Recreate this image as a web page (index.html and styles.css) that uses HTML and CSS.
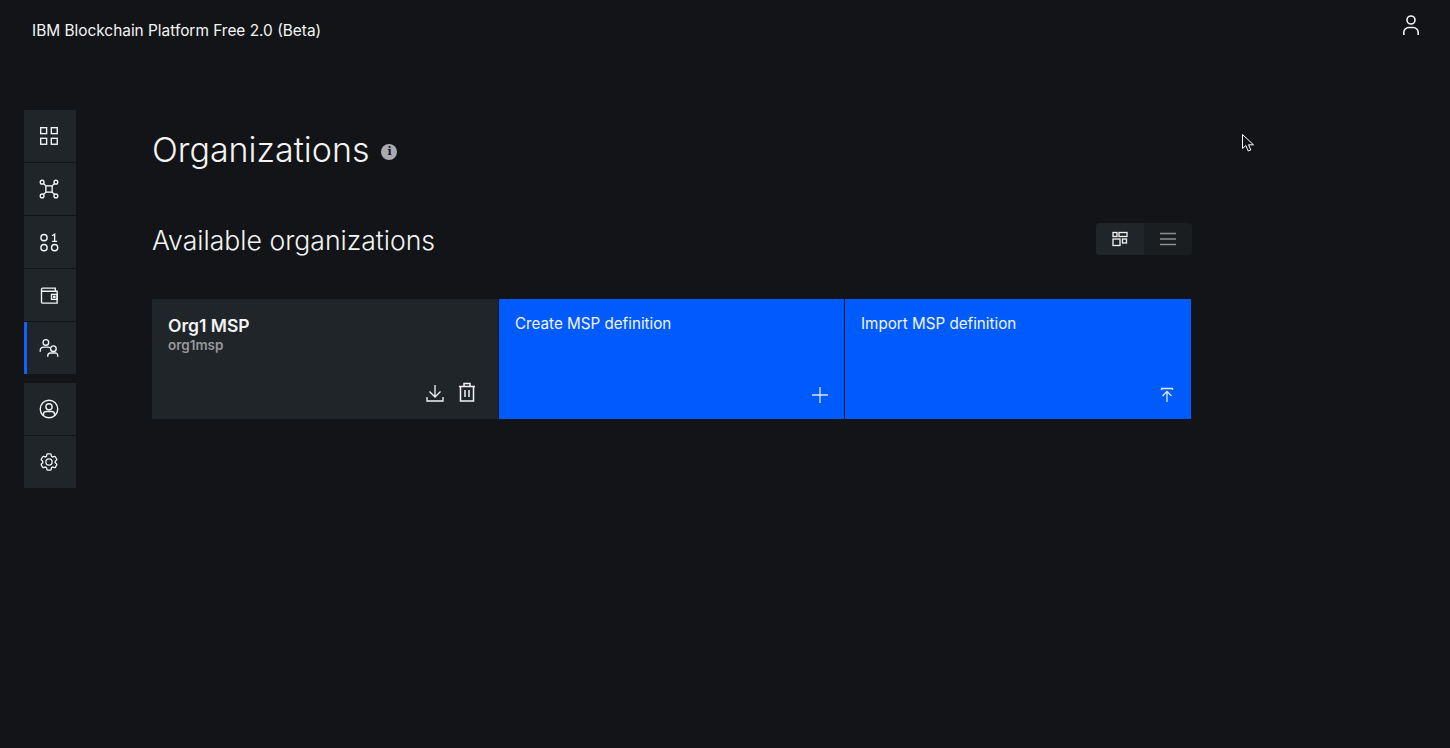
FILE: index.html
```html
<!DOCTYPE html>
<html lang="en">
<head>
<meta charset="utf-8">
<title>IBM Blockchain Platform</title>
<link rel="stylesheet" href="styles.css">
</head>
<body>
<header class="topbar">
  <span class="brand">IBM Blockchain Platform Free 2.0 (Beta)</span>
  <svg class="icon-user" viewBox="0 0 20 24" width="20" height="24" fill="none" stroke="#f4f4f4" stroke-width="1.6"><circle cx="10" cy="6" r="4"/><path d="M2.800 21v-2.500a5 5 0 0 1 5-5h4.400a5 5 0 0 1 5 5V21"/></svg>
</header>
<div class="shell">
  <nav class="sidenav">
    <div class="navgroup">
      <a class="navitem"><svg viewBox="0 0 32 32" class="navicon"><rect x="2.700" y="2.700" width="9.500" height="9.500"/><rect x="19.700" y="2.700" width="9.500" height="9.500"/><rect x="2.700" y="19.700" width="9.500" height="9.500"/><rect x="19.700" y="19.700" width="9.500" height="9.500"/></svg></a>
      <a class="navitem"><svg viewBox="0 0 32 32" class="navicon"><circle cx="5" cy="5" r="3"/><circle cx="27" cy="5" r="3"/><circle cx="5" cy="27" r="3"/><circle cx="27" cy="27" r="3"/><rect x="11" y="11" width="10" height="10"/><path d="M7.200 7.200l3.800 3.800M24.800 7.200l-3.800 3.800M7.200 24.800l3.800-3.800M24.800 24.800l-3.800-3.800"/></svg></a>
      <a class="navitem"><svg viewBox="0 0 32 32" class="navicon"><circle cx="8" cy="9" r="5"/><circle cx="8" cy="25" r="5"/><circle cx="25" cy="25" r="5"/><path d="M21 6 25 3.500V15M21 15h8"/></svg></a>
      <a class="navitem"><svg viewBox="0 0 32 32" class="navicon"><path d="M4 10h25v19H6a2 2 0 0 1-2-2V7a2 2 0 0 1 2-2h20v5"/><rect x="20" y="15" width="9" height="8"/><circle cx="24.500" cy="19" r="1.200"/></svg></a>
      <a class="navitem active"><svg viewBox="0 0 32 32" class="navicon"><circle cx="11" cy="7" r="4.500"/><path d="M2 22v-2a5.500 5.500 0 0 1 5.500-5.500h7a5.500 5.500 0 0 1 3 1"/><circle cx="23" cy="17" r="4.500"/><path d="M14 30v-1.500a4.500 4.500 0 0 1 4.500-4.500h9a4.500 4.500 0 0 1 2.500 4.500V30"/></svg></a>
    </div>
    <div class="navgroup">
      <a class="navitem"><svg viewBox="0 0 32 32" class="navicon"><circle cx="16" cy="16" r="14"/><circle cx="16" cy="12.500" r="5"/><path d="M7 26v-1a5 5 0 0 1 5-5h8a5 5 0 0 1 5 5v1"/></svg></a>
      <a class="navitem"><svg viewBox="0 0 32 32" class="navicon navfill"><path d="M27,16.76c0-.25,0-.5,0-.76s0-.51,0-.77l1.920-1.680A2,2,0,0,0,29.300,11L26.940,7a2,2,0,0,0-1.730-1,2,2,0,0,0-.64.100l-2.430.820a11.350,11.350,0,0,0-1.310-.750l-.51-2.520a2,2,0,0,0-2-1.610H13.640a2,2,0,0,0-2,1.610l-.51,2.520a11.480,11.480,0,0,0-1.320.750L7.430,6.060A2,2,0,0,0,6.790,6,2,2,0,0,0,5.060,7L2.700,11a2,2,0,0,0,.41,2.510L5,15.240c0,.25,0,.5,0,.76s0,.51,0,.77L3.110,18.450A2,2,0,0,0,2.700,21L5.060,25a2,2,0,0,0,1.730,1,2,2,0,0,0,.64-.1l2.430-.82a11.350,11.350,0,0,0,1.310.75l.51,2.520a2,2,0,0,0,2,1.610h4.720a2,2,0,0,0,2-1.610l.51-2.520a11.480,11.480,0,0,0,1.320-.75l2.420.82a2,2,0,0,0,.64.1,2,2,0,0,0,1.730-1L29.300,21a2,2,0,0,0-.41-2.510ZM25.210,24l-3.430-1.160a8.860,8.860,0,0,1-2.710,1.570L18.360,28H13.640l-.71-3.550a9.360,9.360,0,0,1-2.700-1.570L6.790,24,4.430,20l2.720-2.400a8.900,8.900,0,0,1,0-3.130L4.430,12,6.790,8l3.430,1.160a8.860,8.860,0,0,1,2.710-1.570L13.640,4h4.720l.71,3.550a9.360,9.360,0,0,1,2.700,1.570L25.210,8,27.570,12l-2.720,2.400a8.900,8.900,0,0,1,0,3.130L27.570,20Z"/><path d="M16,22a6,6,0,1,1,6-6A5.940,5.940,0,0,1,16,22Zm0-10a3.910,3.910,0,0,0-4,4,3.910,3.910,0,0,0,4,4,3.910,3.910,0,0,0,4-4A3.910,3.910,0,0,0,16,12Z"/></svg></a>
    </div>
  </nav>
  <main class="content">
    <div class="titlerow">
      <h1 class="title">Organizations</h1>
      <span class="infodot">i</span>
    </div>
    <div class="sectionrow">
      <h2 class="section">Available organizations</h2>
      <div class="switcher">
        <span class="switch on"><svg viewBox="0 0 16 16" width="16" height="16" fill="none" stroke="#f4f4f4" stroke-width="1.300"><rect x="1" y="1.500" width="4" height="4"/><rect x="7" y="1.500" width="8" height="4"/><rect x="1" y="8" width="7" height="6.500"/><rect x="10.500" y="8" width="4" height="4"/></svg></span>
        <span class="switch"><svg viewBox="0 0 16 16" width="16" height="16" fill="none" stroke="#8d8d8d" stroke-width="1.300"><path d="M0 2.500h16M0 8h16M0 13.500h16"/></svg></span>
      </div>
    </div>
    <div class="cards">
      <article class="card org">
        <div class="orgname">Org1 MSP</div>
        <div class="orgid">org1msp</div>
        <div class="cardactions">
          <svg viewBox="0 0 18 18" width="18" height="18" fill="none" stroke="#f4f4f4" stroke-width="1.300"><path d="M9 1v11.500M3.500 7.500 9 13l5.500-5.500M1 13v4h16v-4"/></svg>
          <svg viewBox="0 0 18 20" width="18" height="20" fill="none" stroke="#f4f4f4" stroke-width="1.500"><path d="M1 4.500h16M2.500 4.500V19h13V4.500M6 4.500V1.500h6v3M7 8v7M11 8v7"/></svg>
        </div>
      </article>
      <article class="card action">
        <div class="cardlabel">Create MSP definition</div>
        <svg class="cardicon" viewBox="0 0 16 16" width="16" height="16" fill="none" stroke="#dbe6ff" stroke-width="1.300"><path d="M8 0v16M0 8h16"/></svg>
      </article>
      <article class="card action">
        <div class="cardlabel">Import MSP definition</div>
        <svg class="cardicon" viewBox="0 0 16 16" width="16" height="16" fill="none" stroke="#dbe6ff" stroke-width="1.300"><path d="M2.500 3V1.500h11V3M8 15V4.500M3.500 9 8 4.500 12.500 9"/></svg>
      </article>
    </div>
  </main>
</div>
<svg class="pointer" viewBox="0 0 12 18" width="12" height="18"><path d="M.5.5v14l3.400-3 2.300 5.500 2.600-1-2.300-5.200h5z" fill="#121417" stroke="#fff" stroke-width="1"/></svg>
</body>
</html>
```
FILE: styles.css
```css
* { box-sizing: border-box; }
html, body { height: 100%; }
body {
  margin: 0;
  height: 748px;
  overflow: hidden;
  background: #121417;
  color: #f4f4f4;
  font-family: "Inter", "Noto Sans", sans-serif;
  position: relative;
}
.topbar {
  height: 60px;
  display: flex;
  align-items: center;
  justify-content: space-between;
  padding: 0 29px 0 32px;
}
.brand { font-size: 15.400px; font-weight: 400; }
.icon-user { margin-top: -8px; }
.shell {
  display: flex;
  padding: 50px 0 0 24px;
}
.sidenav {
  width: 52px;
  display: flex;
  flex-direction: column;
  gap: 9px;
}
.navgroup {
  display: flex;
  flex-direction: column;
  gap: 1px;
}
.navitem {
  height: 52px;
  background: #1f2529;
  display: flex;
  align-items: center;
  justify-content: center;
  padding-right: 2px;
}
.navitem.active {
  border-left: 3px solid #0f62fe;
  padding-right: 5px;
}
.navicon {
  width: 20px;
  height: 20px;
  fill: none;
  stroke: #f4f4f4;
  stroke-width: 2.200;
}
.navfill { fill: #f4f4f4; stroke: none; }
.content {
  width: 1039px;
  margin-left: 76px;
}
.titlerow {
  display: flex;
  align-items: center;
  gap: 12px;
  height: 60px;
  margin-top: 9px;
}
.title {
  margin: 0;
  font-size: 34px;
  font-weight: 300;
}
.infodot {
  width: 16px;
  height: 16px;
  border-radius: 50%;
  background: #a8a9b1;
  color: #121417;
  font-family: "DejaVu Serif", serif;
  font-size: 11px;
  font-weight: 700;
  line-height: 16px;
  text-align: center;
  margin-top: 5px;
}
.sectionrow {
  display: flex;
  align-items: flex-start;
  justify-content: space-between;
  height: 76px;
  margin-top: 44px;
}
.section {
  margin: 0;
  font-size: 26.600px;
  font-weight: 300;
  line-height: 35px;
}
.switcher {
  display: flex;
  width: 96px;
  height: 32px;
  border-radius: 4px;
  overflow: hidden;
  background: #1a1e21;
  margin-right: -1px;
}
.switch {
  width: 48px;
  display: flex;
  align-items: center;
  justify-content: center;
}
.switch.on { background: #1f2529; }
.cards {
  display: grid;
  grid-template-columns: 346px 345px 346px;
  gap: 1px;
  height: 120px;
}
.card {
  position: relative;
  padding: 17px 16px 16px;
}
.org { background: #1f2529; }
.action { background: #005bff; }
.orgname { font-size: 17.500px; font-weight: 600; line-height: 20px; }
.orgid { font-size: 13.500px; font-weight: 600; color: #989898; line-height: 20px; margin-top: -1px; }
.cardlabel { font-size: 15.200px; line-height: 16px; }
.cardactions {
  position: absolute;
  right: 22px;
  bottom: 17px;
  display: flex;
  align-items: flex-end;
  gap: 14px;
}
.cardicon {
  position: absolute;
  right: 16px;
  bottom: 16px;
}
.pointer {
  position: absolute;
  left: 1242px;
  top: 134px;
}
```
